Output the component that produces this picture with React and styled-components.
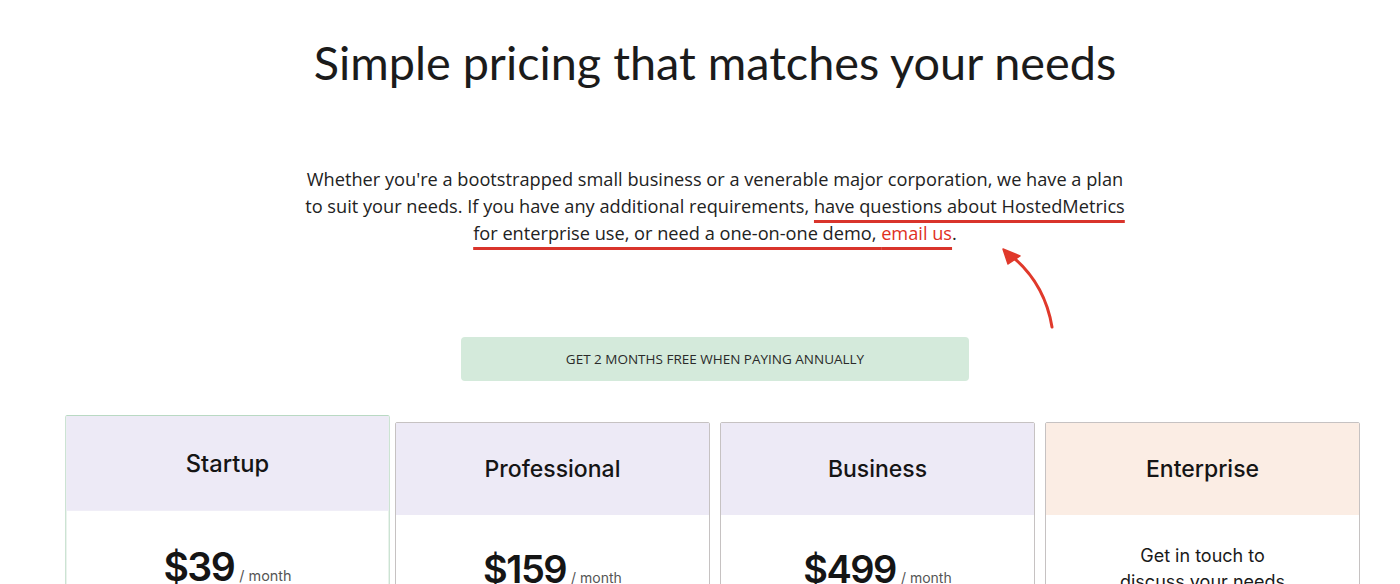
import React from "react";
import styled, {createGlobalStyle} from "styled-components";

const plans = [
  {name: 'Startup', price: '$39', featured: true},
  {name: 'Professional', price: '$159'},
  {name: 'Business', price: '$499'},
  {name: 'Enterprise', note: ['Get in touch to', 'discuss your needs'], tone: 'peach'},
]

const App = () => {
  return (
    <Page>
      <GlobalStyle/>
      <Title>Simple pricing that matches your needs</Title>
      <Intro>
        <Lead>
          Whether you're a bootstrapped small business or a venerable major corporation, we have a plan<br/>
          to suit your needs. If you have any additional requirements, <Marked>have questions about HostedMetrics<br/>
          for enterprise use, or need a one-on-one demo, <Link>email us</Link></Marked>.
        </Lead>
        <Arrow width="80" height="100" viewBox="0 0 80 100">
          <path d="M62 87 Q55 45 24 18" fill="none" stroke="#e0392b" strokeWidth="3" strokeLinecap="round"/>
          <path d="M13 9 L18 24 L30 16 Z" fill="#e0392b" stroke="#e0392b" strokeWidth="1.5" strokeLinejoin="round"/>
        </Arrow>
        <Banner>GET 2 MONTHS FREE WHEN PAYING ANNUALLY</Banner>
      </Intro>
      <Cards>
        {plans.map(plan => (
          <Card key={plan.name} $featured={plan.featured}>
            <CardHead $tone={plan.tone}>
              <PlanName>{plan.name}</PlanName>
            </CardHead>
            <CardBody>
              {plan.price ? (
                <Price>
                  {plan.price}
                  <Per>/ month</Per>
                </Price>
              ) : (
                <Note>
                  {plan.note.map(line => <span key={line}>{line}</span>)}
                </Note>
              )}
            </CardBody>
          </Card>
        ))}
      </Cards>
    </Page>
  )
}

export default App;

const GlobalStyle = createGlobalStyle`
  html, body {
    margin: 0;
    background: #fff;
    overflow: hidden;
  }
`

const Page = styled.div`
  width: 1400px;
  box-sizing: border-box;
  padding: 34px 0 0 30px;
  color: #1d1d1d;
`

const Title = styled.h1`
  margin: 0;
  text-align: center;
  font-family: Lato, "Open Sans", sans-serif;
  font-weight: 400;
  font-size: 46.8px;
  line-height: 56px;
  color: #1b1b1b;
`

const Intro = styled.div`
  position: relative;
  display: flex;
  flex-direction: column;
  align-items: center;
`

const Lead = styled.p`
  margin: 76px 0 0;
  text-align: center;
  font-family: "Open Sans", sans-serif;
  font-size: 18.2px;
  line-height: 27px;
  color: #222;
`

const Marked = styled.span`
  text-decoration: underline;
  text-decoration-color: #d9342b;
  text-decoration-thickness: 3px;
  text-underline-offset: 7px;
`

const Link = styled.span`
  color: #e0301e;
`

const Arrow = styled.svg`
  position: absolute;
  left: 960px;
  top: 150px;
`

const Banner = styled.div`
  margin-top: 90px;
  width: 508px;
  height: 44px;
  display: flex;
  align-items: center;
  justify-content: center;
  background: #d4eadb;
  border-radius: 4px;
  font-family: "Open Sans", sans-serif;
  font-size: 13.5px;
  color: #2a2a2a;
`

const Cards = styled.div`
  margin: 41px 40px 0;
  display: grid;
  grid-template-columns: repeat(4, 315px);
  column-gap: 10px;
`

const Card = styled.div`
  height: 420px;
  display: flex;
  flex-direction: column;
  background: #fff;
  border: 1px solid ${p => p.$featured ? '#b9d9c3' : '#c6c2c2'};
  border-radius: 2px;
  box-sizing: border-box;
  transform: ${p => p.$featured ? 'scale(1.03)' : 'none'};
  transform-origin: 50% 233px;
`

const CardHead = styled.div`
  height: 92px;
  display: flex;
  align-items: center;
  justify-content: center;
  background: ${p => p.$tone === 'peach' ? '#fbede4' : '#edeaf6'};
`

const PlanName = styled.h3`
  margin: 0;
  font-family: Inter, Roboto, sans-serif;
  font-weight: 500;
  font-size: 23px;
  color: #151515;
`

const CardBody = styled.div`
  display: flex;
  justify-content: center;
  padding-top: 32px;
`

const Price = styled.div`
  font-family: Inter, Roboto, sans-serif;
  font-weight: 600;
  font-size: 38px;
  line-height: 44px;
  letter-spacing: -1.5px;
  color: #151515;
`

const Per = styled.span`
  margin-left: 5px;
  font-size: 14px;
  font-weight: 400;
  letter-spacing: 0;
  color: #555;
`

const Note = styled.div`
  margin-top: -4px;
  display: flex;
  flex-direction: column;
  align-items: center;
  font-family: Inter, Roboto, sans-serif;
  font-size: 18px;
  line-height: 26px;
  color: #1a1a1a;
`
